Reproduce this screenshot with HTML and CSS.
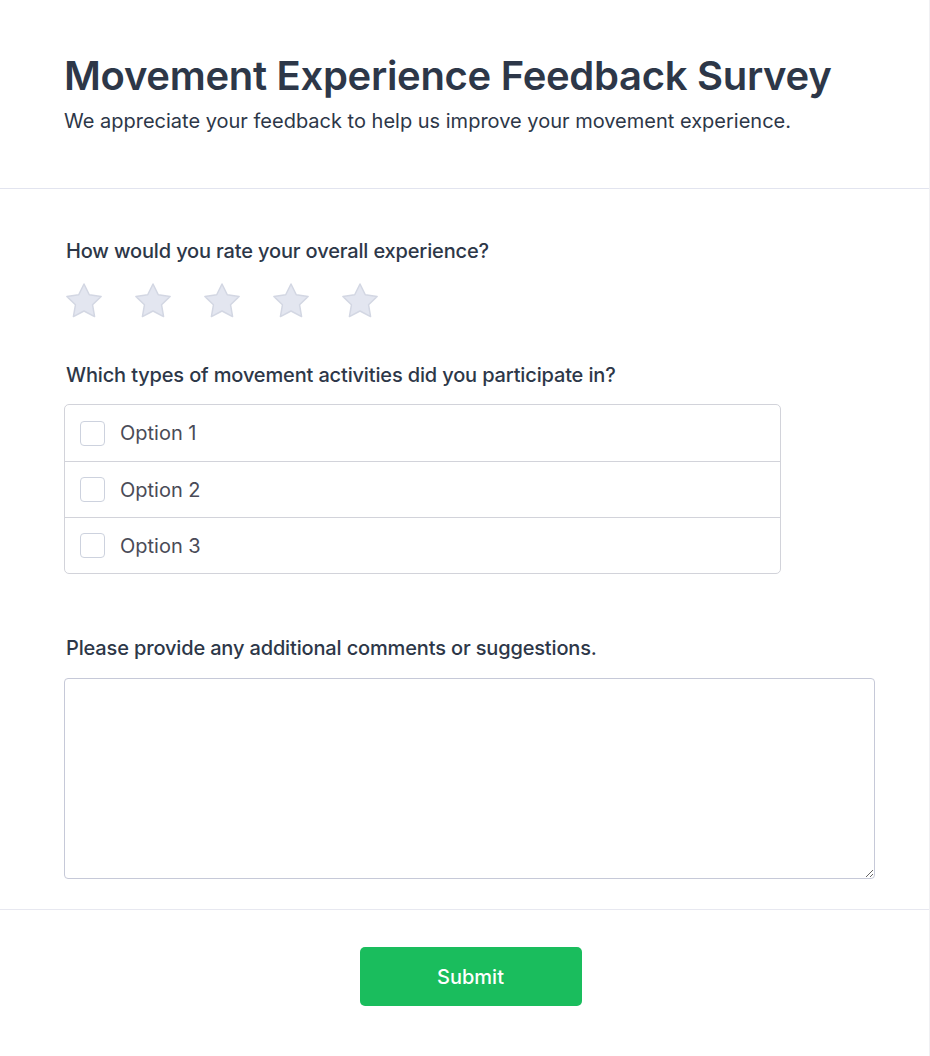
FILE: index.html
```html
<!DOCTYPE html>
<html lang="en">
<head>
<meta charset="utf-8">
<title>Movement Experience Feedback Survey</title>
<link rel="stylesheet" href="styles.css">
</head>
<body>
<div class="page">
  <header class="head">
    <h1 class="title">Movement Experience Feedback Survey</h1>
    <p class="subtitle">We appreciate your feedback to help us improve your movement experience.</p>
  </header>
  <main class="body">
    <section class="q q-rating">
      <div class="label">How would you rate your overall experience?</div>
      <div class="stars">
        <svg class="star" viewBox="0 0 40 40" width="40" height="40"><polygon points="20,3 25.29,13.72 37.12,15.44 28.56,23.78 30.58,35.56 20,30 9.42,35.56 11.44,23.78 2.88,15.44 14.71,13.72"/></svg>
        <svg class="star" viewBox="0 0 40 40" width="40" height="40"><polygon points="20,3 25.29,13.72 37.12,15.44 28.56,23.78 30.58,35.56 20,30 9.42,35.56 11.44,23.78 2.88,15.44 14.71,13.72"/></svg>
        <svg class="star" viewBox="0 0 40 40" width="40" height="40"><polygon points="20,3 25.29,13.72 37.12,15.44 28.56,23.78 30.58,35.56 20,30 9.42,35.56 11.44,23.78 2.88,15.44 14.71,13.72"/></svg>
        <svg class="star" viewBox="0 0 40 40" width="40" height="40"><polygon points="20,3 25.29,13.72 37.12,15.44 28.56,23.78 30.58,35.56 20,30 9.42,35.56 11.44,23.78 2.88,15.44 14.71,13.72"/></svg>
        <svg class="star" viewBox="0 0 40 40" width="40" height="40"><polygon points="20,3 25.29,13.72 37.12,15.44 28.56,23.78 30.58,35.56 20,30 9.42,35.56 11.44,23.78 2.88,15.44 14.71,13.72"/></svg>
      </div>
    </section>
    <section class="q q-checks">
      <div class="label">Which types of movement activities did you participate in?</div>
      <div class="options">
        <label class="option"><span class="box"></span><span class="opt-text">Option 1</span></label>
        <label class="option"><span class="box"></span><span class="opt-text">Option 2</span></label>
        <label class="option"><span class="box"></span><span class="opt-text">Option 3</span></label>
      </div>
    </section>
    <section class="q q-comments">
      <div class="label">Please provide any additional comments or suggestions.</div>
      <textarea class="comments"></textarea>
    </section>
  </main>
  <footer class="foot">
    <button class="submit" type="button">Submit</button>
  </footer>
</div>
</body>
</html>
```

FILE: styles.css
```css
* { box-sizing: border-box; }
html, body { margin: 0; padding: 0; background: #ffffff; }
body { font-family: "Inter", "Liberation Sans", sans-serif; color: #2d3748; }

.page {
  width: 930px;
  min-height: 1056px;
  border-right: 1px solid #f0f0f3;
}

.head {
  padding: 52px 64px 53px 64px;
  border-bottom: 1px solid #e2e4ef;
}
.title {
  margin: 0;
  font-size: 40px;
  line-height: 48px;
  font-weight: 600;
  color: #2d3748;
  letter-spacing: -0.3px;
}
.subtitle {
  margin: 7px 0 0 0;
  font-size: 20px;
  line-height: 28px;
  font-weight: 400;
  color: #2d3748;
}

.body {
  padding: 48px 54px 30px 64px;
  border-bottom: 1px solid #e7e8f0;
}
.label {
  font-size: 20px;
  line-height: 28px;
  font-weight: 500;
  color: #2d3748;
  padding-left: 2px;
  letter-spacing: -0.15px;
}

.stars {
  display: flex;
  gap: 29px;
  margin-top: 16px;
}
.star { display: block; }
.star polygon {
  fill: #e3e6f0;
  stroke: #d3d7e3;
  stroke-width: 1.5;
  stroke-linejoin: round;
}

.q-checks { margin-top: 40px; }
.options {
  margin-top: 15px;
  width: 717px;
  border: 1px solid #d2d3da;
  border-radius: 5px;
}
.option {
  display: flex;
  align-items: center;
  gap: 15px;
  height: 56px;
  padding-left: 15px;
  border-top: 1px solid #d2d3da;
}
.option:first-child { border-top: none; }
.box {
  width: 25px;
  height: 25px;
  border: 1px solid #cdd2de;
  border-radius: 4px;
  background: #fff;
  flex: none;
}
.opt-text {
  font-size: 20px;
  color: #4a4b57;
}

.q-comments { margin-top: 60px; }
.comments {
  display: block;
  margin-top: 16px;
  width: 811px;
  height: 201px;
  border: 1px solid #c6c9d8;
  border-radius: 4px;
  font-family: inherit;
  resize: vertical;
}

.foot {
  display: flex;
  justify-content: center;
  padding: 37px 0 0 0;
}
.submit {
  width: 222px;
  height: 59px;
  border: none;
  border-radius: 5px;
  background: #1abd5d;
  color: #ffffff;
  font-family: "Inter", "Liberation Sans", sans-serif;
  font-size: 20px;
  font-weight: 500;
  margin-left: 12px;
}
```
